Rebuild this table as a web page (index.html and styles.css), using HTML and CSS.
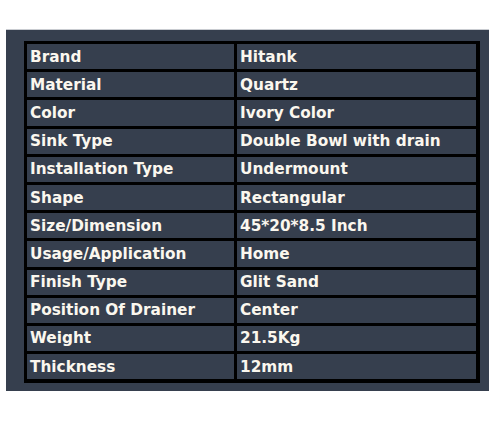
FILE: index.html
```html
<!DOCTYPE html>
<html>
<head>
<meta charset="utf-8">
<link rel="stylesheet" href="styles.css">
</head>
<body>
<div class="panel">
  <table class="specs">
    <tr><td class="k">Brand</td><td>Hitank</td></tr>
    <tr><td class="k">Material</td><td>Quartz</td></tr>
    <tr><td class="k">Color</td><td>Ivory Color</td></tr>
    <tr><td class="k">Sink Type</td><td>Double Bowl with drain</td></tr>
    <tr><td class="k">Installation Type</td><td>Undermount</td></tr>
    <tr><td class="k">Shape</td><td>Rectangular</td></tr>
    <tr><td class="k">Size/Dimension</td><td>45*20*8.5 Inch</td></tr>
    <tr><td class="k">Usage/Application</td><td>Home</td></tr>
    <tr><td class="k">Finish Type</td><td>Glit Sand</td></tr>
    <tr><td class="k">Position Of Drainer</td><td>Center</td></tr>
    <tr><td class="k">Weight</td><td>21.5Kg</td></tr>
    <tr><td class="k">Thickness</td><td>12mm</td></tr>
  </table>
</div>
</body>
</html>
```
FILE: styles.css
```css
html, body {
  margin: 0;
  padding: 0;
  background: #ffffff;
}
body {
  padding-top: 29px;
  padding-left: 6px;
}
.panel {
  box-sizing: border-box;
  width: 483px;
  height: 362px;
  background: #363f4e;
  border-top: 1px solid #c9ccd1;
  padding: 11px 8px 8px 18px;
}
.specs {
  box-sizing: border-box;
  width: 456px;
  border-collapse: separate;
  border-spacing: 3px;
  background: #000000;
  border-right: 1px solid #000;
  border-bottom: 1px solid #000;
  font-family: "DejaVu Sans", Verdana, sans-serif;
  font-weight: bold;
  font-size: 15.3px;
  color: #fbf7ee;
  table-layout: fixed;
}
.specs td {
  background: #363f4e;
  height: 25.2px;
  padding: 0 0 0 3px;
  vertical-align: middle;
  white-space: nowrap;
  line-height: 18px;
}
.specs td.k {
  width: 204px;
}
```
